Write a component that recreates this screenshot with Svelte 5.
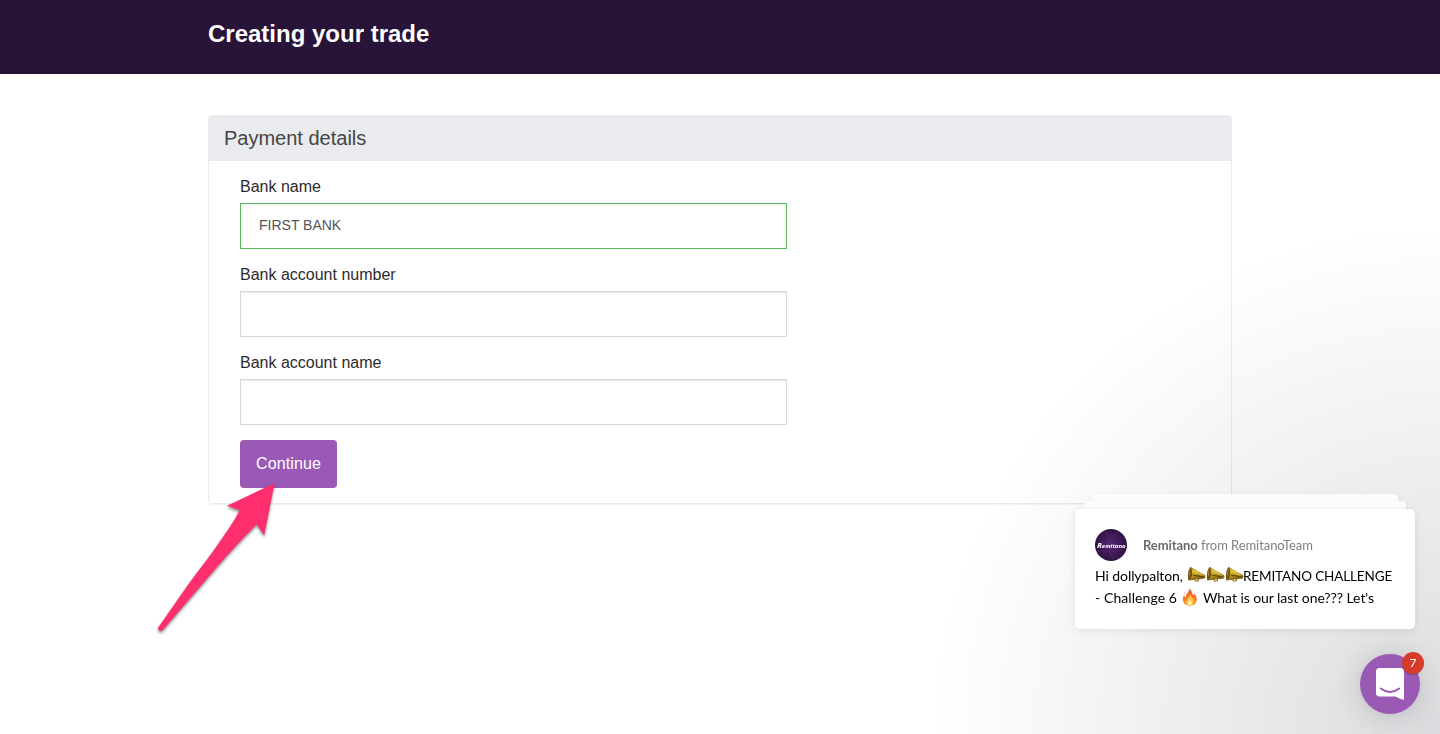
<script>
  let fields = [
    { id: "bank-name", label: "Bank name", value: "FIRST BANK", valid: true },
    { id: "account-number", label: "Bank account number", value: "", valid: false },
    { id: "account-name", label: "Bank account name", value: "", valid: false },
  ];

  let unread = 7;
</script>

{#snippet megaphone()}
  <svg class="emoji megaphone" viewBox="0 0 19 17" aria-hidden="true">
    <defs>
      <linearGradient id="brass" x1="0.3" y1="0" x2="0.6" y2="1">
        <stop offset="0" stop-color="#a5841c" />
        <stop offset="0.35" stop-color="#d8b92f" />
        <stop offset="0.6" stop-color="#b9951e" />
        <stop offset="1" stop-color="#6c500d" />
      </linearGradient>
    </defs>
    <path d="M7 12.4 8.6 15.2 11.3 14.8 11.6 12" fill="none" stroke="#95741b" stroke-width="1.1" />
    <path d="M3.4.8 17.8 9Q18.8 9.8 18.3 11.2L17.6 12.4 1.4 14.4Z" fill="url(#brass)" />
    <path d="M3.4.8Q1 4.4.9 9.4 1 13.4 1.5 14.4 4.2 12.8 5.3 8.8 5.4 3.6 3.4.8Z" fill="#6b4f12" />
    <path d="M3.2 2.7Q1.7 6 1.8 11.4 4.2 8.3 3.2 2.7Z" fill="#a98224" />
    <path d="M6.1 9.2 16.4 10.9" stroke="#5d4710" stroke-width="1.1" />
    <path d="M5.6 4.2 15.4 9.3" stroke="#f0dc62" stroke-width=".8" />
  </svg>
{/snippet}

<header class="page-header">
  <div class="container">
    <h1>Creating your trade</h1>
  </div>
</header>

<main class="container">
  <section class="panel">
    <h2>Payment details</h2>
    <form>
      {#each fields as field}
        <div class="field">
          <label for={field.id}>{field.label}</label>
          <input id={field.id} class:valid={field.valid} type="text" bind:value={field.value} />
        </div>
      {/each}
      <button type="button" class="continue">Continue</button>
    </form>
  </section>
</main>

<svg class="pointer" viewBox="0 0 132 160" aria-hidden="true">
  <path d="M124.5 2.3 77 24.7 89.5 29.2C86 37 80 46 73 56 63 71 52 85 40 101L8.4 146.2Q7.4 148.4 9.2 149.5 11.5 150.7 13.5 148.2L67 86C80 71 94 56 106.8 43.3L114.2 54.5Z" fill="#ff2f6d" />
</svg>

<div class="shade"></div>

<aside class="messenger">
  <div class="stack back"></div>
  <div class="stack middle"></div>
  <article class="message">
    <header>
      <svg class="avatar" viewBox="0 0 32 32" aria-label="Remitano">
        <defs>
          <radialGradient id="plum">
            <stop offset="0" stop-color="#582476" />
            <stop offset="1" stop-color="#2f1443" />
          </radialGradient>
        </defs>
        <circle cx="16" cy="16" r="16" fill="url(#plum)" />
        <path d="M10 3 15 9 11 16 19 31M15 9 24 3" fill="none" stroke="#6d3c85" stroke-width=".3" />
        <text x="2" y="18.8" textLength="28.5" lengthAdjust="spacingAndGlyphs"><tspan class="initial">R</tspan>emitano</text>
      </svg>
      <p><b>Remitano</b> from RemitanoTeam</p>
    </header>
    <p class="line">
      <span class="greeting">Hi dollypalton,</span>
      <span class="horns">{@render megaphone()}{@render megaphone()}{@render megaphone()}</span>
      <span class="caps">REMITANO CHALLENGE</span>
    </p>
    <p class="line">
      <span class="round">- Challenge 6</span>
      <svg class="emoji fire" viewBox="0 0 16 18" aria-hidden="true">
        <defs>
          <linearGradient id="flame" x1="0" y1="0" x2="0" y2="1">
            <stop offset="0" stop-color="#ef5032" />
            <stop offset="1" stop-color="#ff9a2d" />
          </linearGradient>
        </defs>
        <path d="M7.2.5C11 3 9.5 6 11.6 7.3 12.4 6.7 12.1 5.8 12 5 14.5 7.5 15.5 11 14.3 14 13 17 10.7 17.7 8 17.7 4 17.7.8 15.3.8 11.5.8 9.3 1.5 8 2.3 7 2.4 8.5 3.1 9.2 4 9.2 3 5.7 7.9 4.5 7.2.5Z" fill="url(#flame)" />
        <path d="M8.2 6C8.6 9 11 9.6 11.6 11.4 12.8 14.6 10.8 17.3 8 17.4 4.8 17.3 3.3 14.8 4 12.3 4.5 12.8 4.8 13 5.4 12.9 4.8 10 8.3 9.2 8.2 6Z" fill="#ffc342" />
        <path d="M8.2 11.2C8.3 13 10.2 13.5 9.8 15.5 9.2 17.7 6.2 17.4 5.9 15.3 5.8 13.5 8 13.3 8.2 11.2Z" fill="#fff7b4" />
        <circle cx="2.4" cy="5" r=".6" fill="#ef6844" />
      </svg>
      <span class="question">What is our last one??? Let's</span>
    </p>
  </article>
</aside>

<button class="launcher" aria-label="Open messenger">
  <svg viewBox="0 0 28 32" aria-hidden="true">
    <path d="M3.5 0H24.5Q28 0 28 3.5V32Q23.5 30.8 19.5 28.6H3.5Q0 28.6 0 25.1V3.5Q0 0 3.5 0Z" fill="#fff" />
    <path d="M4.8 20.5Q14 27.5 23.2 20.5" fill="none" stroke="#9b59b6" stroke-width="2" stroke-linecap="round" />
  </svg>
  <span class="badge">{unread}</span>
</button>

<style>
  :global(body) {
    min-height: 734px;
    background: #fff;
    font-family: "Liberation Sans", Arial, sans-serif;
    overflow: hidden;
  }

  h1,
  h2,
  p {
    margin: 0;
  }

  .container {
    width: 1024px;
    margin: 0 auto;
  }

  .page-header {
    box-sizing: border-box;
    height: 74px;
    padding-top: 18px;
    background: #281339;
    border-bottom: 3px solid #241033;
  }

  h1 {
    color: #fff;
    font-size: 24px;
    line-height: 32px;
  }

  .panel {
    box-sizing: border-box;
    height: 389px;
    margin-top: 41px;
    border: 1px solid #eaebef;
    border-radius: 4px;
    box-shadow: 0 1px 1px rgba(0, 0, 0, 0.05);
  }

  h2 {
    height: 45px;
    padding-left: 15px;
    background: #eaebef;
    color: #444;
    font-size: 20px;
    font-weight: 400;
    line-height: 45px;
  }

  form {
    display: flex;
    flex-direction: column;
    align-items: flex-start;
    padding: 16px 31px;
  }

  .field {
    display: flex;
    flex-direction: column;
    width: 547px;
    margin-bottom: 16px;
  }

  label {
    margin-bottom: 6px;
    color: #2b2b2b;
    font-size: 16px;
    line-height: 20px;
  }

  input {
    box-sizing: border-box;
    height: 46px;
    padding: 0 18px 2px;
    border: 1px solid #d9d9d9;
    box-shadow: inset 0 1px 1px rgba(0, 0, 0, 0.075);
    color: #555;
    font: 14px "Liberation Sans", Arial, sans-serif;
  }

  input.valid {
    border-color: #5cb85c;
  }

  .continue {
    width: 97px;
    height: 48px;
    margin-top: -1px;
    padding: 0 0 1px;
    border: 0;
    border-radius: 4px;
    background: #9b59b6;
    color: #fff;
    font: 16px "Liberation Sans", Arial, sans-serif;
    letter-spacing: 0.1px;
  }

  /* arrow drawn over the form */
  .pointer {
    position: absolute;
    left: 150px;
    top: 481px;
    width: 132px;
    height: 160px;
    filter: drop-shadow(0 2px 1.5px rgba(0, 0, 0, 0.45));
  }

  .shade {
    position: fixed;
    right: 0;
    bottom: 0;
    width: 500px;
    height: 500px;
    background: radial-gradient(ellipse at bottom right, rgba(29, 39, 54, 0.16) 0%, rgba(29, 39, 54, 0) 72%);
    pointer-events: none;
  }

  .messenger {
    position: fixed;
    right: 25px;
    bottom: 105px;
    display: flex;
    flex-direction: column;
    align-items: center;
    width: 340px;
    font-family: "Proxima Nova", Lato, sans-serif;
  }

  .stack {
    height: 8px;
    border-radius: 4px 4px 0 0;
    background: #fdfdfd;
    box-shadow: 0 1px 6px rgba(0, 0, 0, 0.06);
  }

  .back {
    width: 306px;
    height: 7px;
  }

  .middle {
    width: 322px;
  }

  .message {
    position: relative;
    box-sizing: border-box;
    width: 340px;
    height: 120px;
    padding: 20px;
    border-radius: 5px;
    background: #fff;
    box-shadow: 0 1px 8px rgba(0, 0, 0, 0.1);
  }

  .message header {
    display: flex;
    align-items: center;
    gap: 16px;
    height: 32px;
    margin-bottom: 4px;
    color: #808080;
    font-size: 13px;
    letter-spacing: -0.07px;
  }

  .message header p {
    white-space: nowrap;
  }

  .message header b {
    color: #6b6b6b;
    font-weight: 700;
  }

  .avatar {
    width: 32px;
    height: 32px;
  }

  .avatar text {
    fill: #fff;
    font: italic bold 5.6px "Open Sans", sans-serif;
    letter-spacing: 0;
  }

  .avatar .initial {
    font-size: 7.5px;
  }

  .line {
    display: flex;
    align-items: center;
    height: 22px;
    color: #000;
    font-size: 14px;
    line-height: 22px;
    white-space: nowrap;
  }

  .greeting {
    width: 92px;
    letter-spacing: -0.08px;
  }

  .horns {
    display: flex;
    width: 56px;
  }

  .caps {
    font-size: 13.5px;
    letter-spacing: -0.13px;
  }

  .round {
    width: 87px;
    letter-spacing: 0.08px;
  }

  .question {
    letter-spacing: -0.06px;
  }

  .emoji {
    display: block;
    flex: none;
  }

  .megaphone {
    width: 19px;
    height: 17px;
    margin-top: -4px;
  }

  .fire {
    width: 16px;
    height: 18px;
    margin: -3px 5px 0 0;
  }

  .launcher {
    position: fixed;
    right: 20px;
    bottom: 20px;
    display: flex;
    align-items: center;
    justify-content: center;
    width: 60px;
    height: 60px;
    padding: 0;
    border: 0;
    border-radius: 50%;
    background: #9b59b6;
    box-shadow: 0 1px 6px rgba(0, 0, 0, 0.06), 0 2px 32px rgba(0, 0, 0, 0.16);
  }

  .launcher svg {
    width: 28px;
    height: 32px;
  }

  .badge {
    position: absolute;
    top: -2px;
    right: -4px;
    width: 22px;
    height: 22px;
    border-radius: 50%;
    background: #d63b2b;
    box-shadow: 0 1px 1px rgba(0, 0, 0, 0.25);
    color: #fff;
    font: 12px/21px Lato, sans-serif;
    text-align: center;
  }
</style>
